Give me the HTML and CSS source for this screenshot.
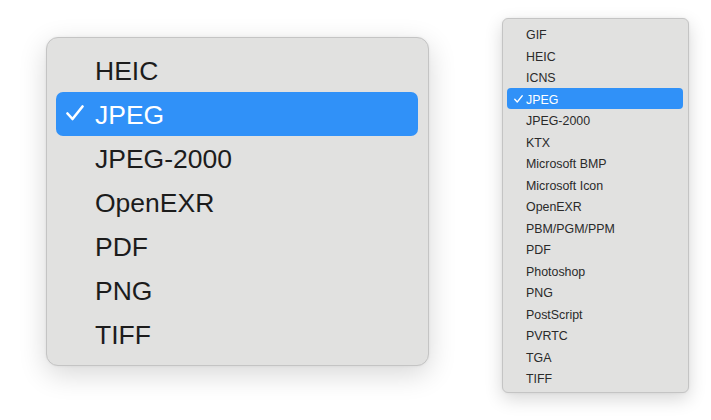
FILE: index.html
```html
<!DOCTYPE html>
<html>
<head>
<meta charset="utf-8">
<link rel="stylesheet" href="styles.css">
</head>
<body>
<div class="stage">
  <div class="menu big">
    <div class="item">HEIC</div>
    <div class="item sel"><svg class="check" viewBox="0 0 18 16"><path d="M1.5 8.5 L6.5 14 L16.5 1.5" /></svg>JPEG</div>
    <div class="item">JPEG-2000</div>
    <div class="item">OpenEXR</div>
    <div class="item">PDF</div>
    <div class="item">PNG</div>
    <div class="item">TIFF</div>
  </div>
  <div class="menu small">
    <div class="item">GIF</div>
    <div class="item">HEIC</div>
    <div class="item">ICNS</div>
    <div class="item sel"><svg class="check" viewBox="0 0 18 16"><path d="M1.5 8.5 L6.5 14 L16.5 1.5" /></svg>JPEG</div>
    <div class="item">JPEG-2000</div>
    <div class="item">KTX</div>
    <div class="item">Microsoft BMP</div>
    <div class="item">Microsoft Icon</div>
    <div class="item">OpenEXR</div>
    <div class="item">PBM/PGM/PPM</div>
    <div class="item">PDF</div>
    <div class="item">Photoshop</div>
    <div class="item">PNG</div>
    <div class="item">PostScript</div>
    <div class="item">PVRTC</div>
    <div class="item">TGA</div>
    <div class="item">TIFF</div>
  </div>
</div>
</body>
</html>
```
FILE: styles.css
```css
html, body {
  margin: 0;
  padding: 0;
  background: #ffffff;
  width: 711px;
  height: 420px;
  overflow: hidden;
  font-family: "Liberation Sans", Arial, sans-serif;
}
.stage {
  display: flex;
  align-items: flex-start;
  padding: 18px 0 0 46px;
  gap: 73px;
}
.menu {
  background: #e1e1e0;
  border: 1px solid #c4c4c4;
  box-sizing: border-box;
  display: flex;
  flex-direction: column;
}
.big {
  margin-top: 19px;
  width: 383px;
  height: 329px;
  border-radius: 12px;
  padding: 10px 10px 10px 9px;
  box-shadow: 0 8px 28px rgba(0,0,0,0.16), 0 0 3px rgba(0,0,0,0.06);
}
.big .item {
  height: 44px;
  padding-left: 39px;
  font-size: 26.5px;
  line-height: 46px;
  color: #1c1c1c;
  border-radius: 7px;
  position: relative;
}
.small {
  width: 187px;
  height: 375px;
  border-radius: 6px;
  padding: 4px 5px 4px 4px;
  box-shadow: 0 6px 18px rgba(0,0,0,0.16), 0 0 3px rgba(0,0,0,0.06);
}
.small .item {
  height: 21.5px;
  padding-left: 19px;
  font-size: 12.4px;
  line-height: 24px;
  color: #2a2a2a;
  border-radius: 4px;
  position: relative;
}
.item.sel {
  background: #3091f8;
  color: #ffffff;
}
.check {
  position: absolute;
  fill: none;
  stroke: #ffffff;
  stroke-linecap: round;
  stroke-linejoin: round;
}
.big .check {
  left: 10px;
  top: 13px;
  width: 18px;
  height: 16px;
  stroke-width: 2.6;
}
.small .check {
  left: 7px;
  top: 7px;
  width: 9px;
  height: 8px;
  stroke-width: 2.6;
}
```
